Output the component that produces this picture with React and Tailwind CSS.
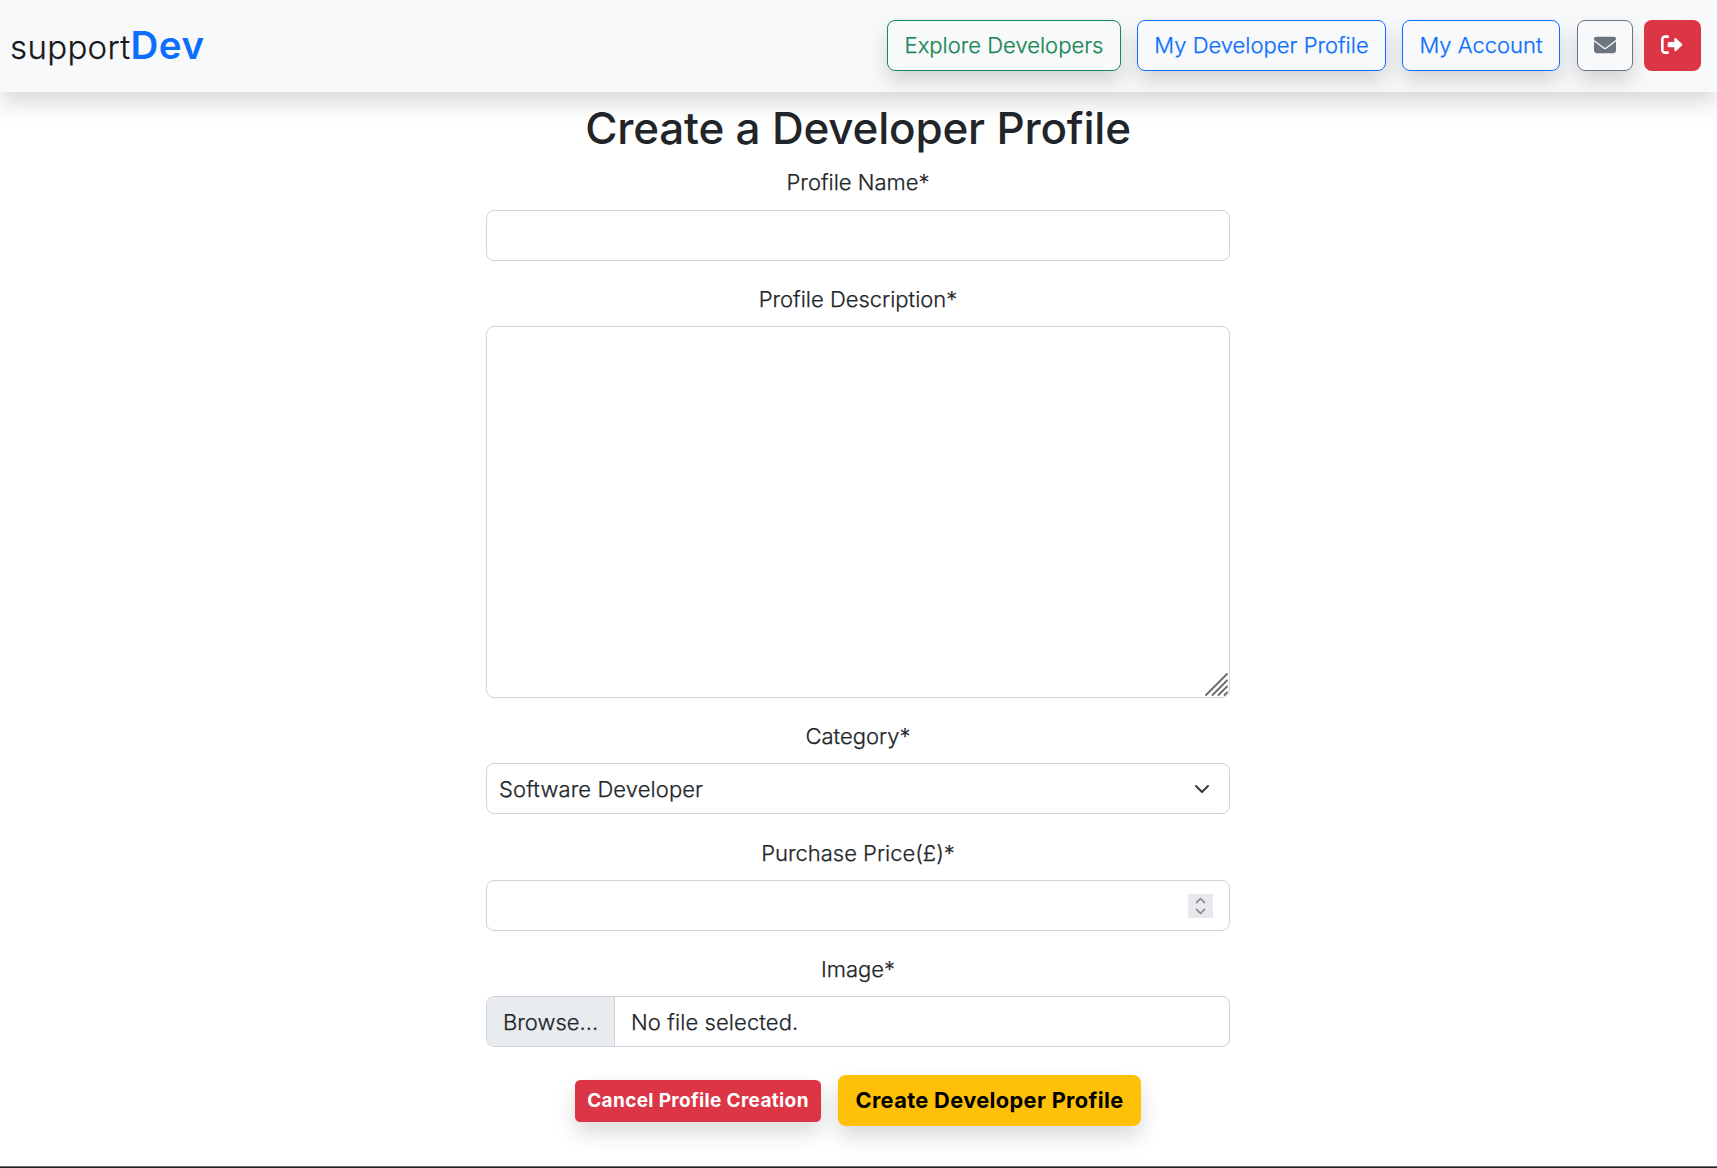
import React from "react";
import { FaEnvelope } from "react-icons/fa6";

const navButton =
  "flex h-[51px] items-center justify-center rounded-lg border pb-0.5 text-[22px] leading-8 shadow-[0_10.67px_21.33px_rgba(0,0,0,0.15)]";
const field = "block h-[51px] w-full rounded-lg border border-[#ced4da] bg-white";
const labelBase = "mb-[11px] block h-8 text-center leading-8";

function LogoutIcon() {
  return (
    <svg className="h-[21.33px] w-[21.33px]" viewBox="0 0 512 512" fill="currentColor">
      <path d="M160 96c17.7 0 32-14.3 32-32s-14.3-32-32-32H96C43 32 0 75 0 128v256c0 53 43 96 96 96h64c17.7 0 32-14.3 32-32s-14.3-32-32-32H96c-17.7 0-32-14.3-32-32V128c0-17.7 14.3-32 32-32h64zM504.500 273.400c4.800-4.500 7.500-10.800 7.500-17.400s-2.700-12.900-7.500-17.400l-144-136c-7-6.600-17.200-8.400-26-4.600S320 110.400 320 120v72H192c-17.700 0-32 14.300-32 32v64c0 17.700 14.300 32 32 32h128v72c0 9.600 5.700 18.200 14.500 22s19 2 26-4.600l144-136z" />
    </svg>
  );
}

function ResizeGrip() {
  return (
    <svg className="pointer-events-none absolute right-[2px] bottom-[2px] h-[23px] w-[23px]" viewBox="0 0 23 23" fill="none" stroke="#696969" strokeWidth="1.8" strokeLinecap="round">
      <path d="M1 22 L22 1 M7.500 22 L22 7.500 M13.500 22 L22 13.500 M19.500 22 L22 19.500" />
    </svg>
  );
}

export default function App() {
  return (
    <div className="h-[1168px] overflow-hidden bg-white font-['Inter',sans-serif] text-[22px] font-light text-[#212529] [-webkit-text-stroke:0.25px]">
      <header className="relative flex h-[92px] items-start justify-between bg-[#f8f9fa] pt-5 pr-4 pl-[10px] shadow-[0_10.67px_21.33px_rgba(0,0,0,0.15)]">
        <a className="whitespace-nowrap text-[33px] leading-[50px] tracking-[0.35px] text-[#16181b]">
          support<span className="text-[38.5px] font-semibold tracking-[0.6px] text-[#0d6efd] [-webkit-text-stroke:0]">Dev</span>
        </a>
        <nav className="flex items-center">
          <button className={`${navButton} mr-4 w-[234px] border-[#198754] text-[#198754]`}>Explore Developers</button>
          <button className={`${navButton} mr-4 w-[249px] border-[#0d6efd] text-[#0d6efd]`}>My Developer Profile</button>
          <button className={`${navButton} mr-[17px] w-[158px] border-[#0d6efd] text-[#0d6efd]`}>My Account</button>
          <button aria-label="Messages" className={`${navButton} mr-[11px] w-[56px] border-[#6c757d] text-[#6c757d]`}>
            <FaEnvelope className="h-[22px] w-[22px]" />
          </button>
          <button aria-label="Log out" className="flex h-[51px] w-[57px] items-center justify-center rounded-lg bg-[#dc3545] pr-px pb-px text-white">
            <LogoutIcon />
          </button>
        </nav>
      </header>

      <main className="relative mx-auto w-[745px] pt-[9px] pr-px">
        <h1 className="mb-[11px] h-[54px] text-center text-[44px] leading-[54px] font-medium tracking-[-0.2px] whitespace-nowrap [-webkit-text-stroke:0]">
          Create a Developer Profile
        </h1>
        <form>
          <label className="mb-3 block h-8 text-center leading-8">Profile Name*</label>
          <input className={field} />

          <label className={`${labelBase} mt-[22px]`}>Profile Description*</label>
          <div className="relative">
            <textarea className="block h-[372px] w-full resize-none rounded-lg border border-[#ced4da] bg-white" />
            <ResizeGrip />
          </div>

          <label className={`${labelBase} mt-[22px]`}>Category*</label>
          <div className={`${field} flex items-center justify-between pr-[19px] pl-3`}>
            <span className="pt-px tracking-[0.1px]">Software Developer</span>
            <svg className="h-4 w-4" viewBox="0 0 16 16" fill="none" stroke="#343a40" strokeWidth="2" strokeLinecap="round" strokeLinejoin="round">
              <path d="m2 5 6 6 6-6" />
            </svg>
          </div>

          <label className={`${labelBase} mt-[23px]`}>Purchase Price(£)*</label>
          <div className={`${field} flex items-center justify-end pr-4`}>
            <span className="flex h-6 w-[25px] items-center justify-center bg-[#e9e9ed]">
              <svg className="h-6 w-[25px]" viewBox="0 0 25 24" fill="none" stroke="#8f8f9d" strokeWidth="1.800" strokeLinecap="round" strokeLinejoin="round">
                <path d="m8.500 8.500 4-3.800 4 3.800M8.500 15.500l4 3.800 4-3.800" />
              </svg>
            </span>
          </div>

          <label className={`${labelBase} mt-[22px]`}>Image*</label>
          <div className={`${field} flex items-stretch overflow-hidden`}>
            <span className="flex w-[128px] items-center border-r border-[#ced4da] bg-[#e9ecef] pt-px pl-4">Browse...</span>
            <span className="flex items-center pt-px pl-4 tracking-[0.1px]">No file selected.</span>
          </div>

          <div className="mt-7 flex items-center justify-center gap-[17px] [-webkit-text-stroke:0]">
            <button type="button" className="h-[42px] w-[246px] rounded-[5.33px] bg-[#dc3545] pt-px text-[19px] font-bold tracking-[0.35px] whitespace-nowrap text-white shadow-[0_10.67px_21.33px_rgba(0,0,0,0.15)]">
              Cancel Profile Creation
            </button>
            <button type="button" className="h-[51px] w-[303px] rounded-lg bg-[#ffc107] text-[21.8px] font-bold tracking-[0.35px] whitespace-nowrap text-black shadow-[0_10.67px_21.33px_rgba(0,0,0,0.15)]">
              Create Developer Profile
            </button>
          </div>
        </form>
      </main>
      <footer className="relative mt-10 h-[2px] border-t border-[#6c6e71] bg-[#212529]" />
    </div>
  );
}
